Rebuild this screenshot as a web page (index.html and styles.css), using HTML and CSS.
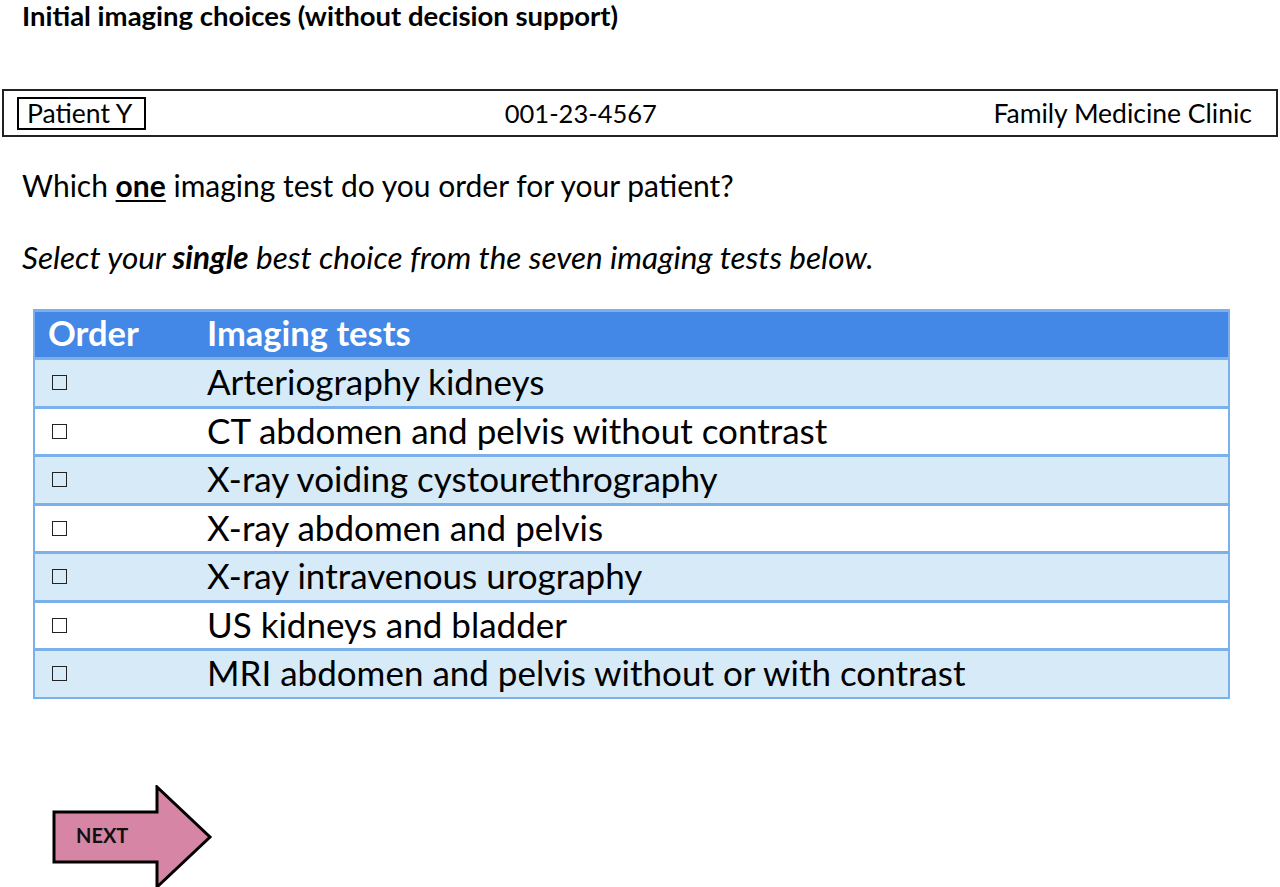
FILE: index.html
```html
<!DOCTYPE html>
<html>
<head>
<meta charset="utf-8">
<link rel="stylesheet" href="styles.css">
</head>
<body>
<div class="page">
  <h1 class="title">Initial imaging choices (without decision support)</h1>
  <div class="patient-bar">
    <span class="patient-name">Patient Y</span>
    <span class="patient-id">001-23-4567</span>
    <span class="clinic">Family Medicine Clinic</span>
  </div>
  <p class="question">Which <b class="u">one</b> imaging test do you order for your patient?</p>
  <p class="instruction">Select your <b>single</b> best choice from the seven imaging tests below.</p>
  <div class="table">
    <div class="row head"><span class="c1">Order</span><span class="c2">Imaging tests</span></div>
    <div class="row alt"><span class="c1"><i class="box"></i></span><span class="c2">Arteriography kidneys</span></div>
    <div class="row"><span class="c1"><i class="box"></i></span><span class="c2">CT abdomen and pelvis without contrast</span></div>
    <div class="row alt"><span class="c1"><i class="box"></i></span><span class="c2">X-ray voiding cystourethrography</span></div>
    <div class="row"><span class="c1"><i class="box"></i></span><span class="c2">X-ray abdomen and pelvis</span></div>
    <div class="row alt"><span class="c1"><i class="box"></i></span><span class="c2">X-ray intravenous urography</span></div>
    <div class="row"><span class="c1"><i class="box"></i></span><span class="c2">US kidneys and bladder</span></div>
    <div class="row alt"><span class="c1"><i class="box"></i></span><span class="c2">MRI abdomen and pelvis without or with contrast</span></div>
  </div>
  <div class="next">
    <svg class="arrow" width="162" height="104" viewBox="0 0 162 104">
      <polygon points="2,27 105,27 105,2 158,52 105,102 105,77 2,77" fill="#d685a5" stroke="#000" stroke-width="3" stroke-linejoin="miter"/>
    </svg>
    <span class="next-label">NEXT</span>
  </div>
</div>
</body>
</html>
```
FILE: styles.css
```css
html, body {
  margin: 0;
  padding: 0;
  background: #fff;
}
.page {
  font-family: Lato, "Open Sans", "Liberation Sans", sans-serif;
  color: #000;
  width: 1280px;
  height: 887px;
  overflow: hidden;
}
.title {
  margin: 0;
  padding: 1px 0 0 22px;
  font-size: 27.5px;
  font-weight: bold;
  line-height: 30px;
  white-space: nowrap;
}
.patient-bar {
  margin: 58px 0 0 2px;
  width: 1276px;
  height: 48px;
  box-sizing: border-box;
  border: 2px solid #222;
  display: flex;
  align-items: center;
  justify-content: space-between;
  padding: 0 24px 0 13px;
  font-size: 26.5px;
}
.patient-name {
  border: 2px solid #000;
  padding: 0 12px 0 8px;
  line-height: 29px;
}
.patient-id {
  margin-left: 22px;
  font-size: 25.5px;
}
.question {
  margin: 31px 0 0 22px;
  font-size: 30px;
  line-height: 34px;
  white-space: nowrap;
}
.u {
  text-decoration: underline;
  text-decoration-thickness: 2px;
  text-underline-offset: 3px;
}
.instruction {
  margin: 38px 0 0 22px;
  font-size: 31.5px;
  line-height: 34px;
  font-style: italic;
  white-space: nowrap;
}
.table {
  margin: 35px 0 0 33px;
  width: 1197px;
  box-sizing: border-box;
  border: 2px solid #7cb0ea;
  border-top-width: 3px;
}
.row {
  display: flex;
  align-items: center;
  height: 45.5px;
  border-top: 3px solid #7cb0ea;
  background: #fff;
  font-size: 35px;
  white-space: nowrap;
  line-height: 40px;
}
.c2 {
  margin-top: -3px;
}
.row.head {
  border-top: none;
  height: 45px;
  background: #4388e7;
  color: #fff;
  font-weight: bold;
  font-size: 34.5px;
}
.row.alt {
  background: #d6eaf8;
}
.c1 {
  width: 172px;
  padding-left: 13px;
  box-sizing: border-box;
  display: flex;
  align-items: center;
}
.row.head .c1 {
  margin-top: -3px;
}
.box {
  display: block;
  width: 15px;
  height: 15px;
  box-sizing: border-box;
  border: 1.5px solid #222;
  margin-left: 4px;
}
.next {
  margin: 86px 0 0 52px;
  position: relative;
  width: 162px;
  height: 104px;
}
.arrow {
  display: block;
}
.next-label {
  position: absolute;
  left: 24px;
  top: 38px;
  font-size: 20px;
  font-weight: bold;
  color: #111;
}
```
